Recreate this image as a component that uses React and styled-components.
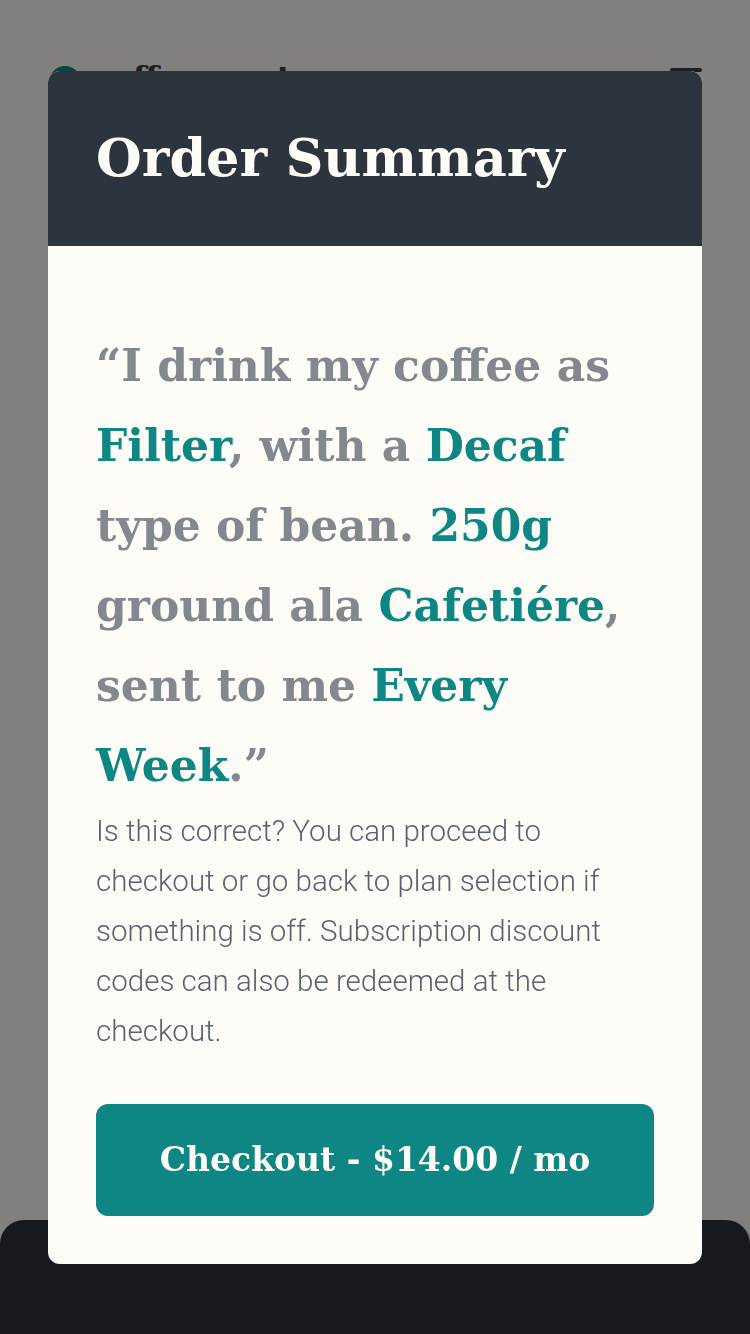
import styled, { createGlobalStyle } from "styled-components";

const Global = createGlobalStyle`
  html, body {
    margin: 0;
    padding: 0;
    background: #fefcf7;
  }
  * { box-sizing: border-box; }
`;

const serif = `"DejaVu Serif", "Liberation Serif", serif`;
const sans = `Roboto, "Liberation Sans", sans-serif`;

const App = () => {
  return (
    <Page>
      <Global />
      <TopBar>
        <Logo>
          <LogoMark viewBox="0 0 32 32">
            <circle cx="16" cy="16" r="15" fill="#0E8784" />
          </LogoMark>
          <LogoText>coffeeroasters</LogoText>
        </Logo>
        <Burger>
          <span />
          <span />
          <span />
        </Burger>
      </TopBar>
      <Main />
      <Footer />

      <Overlay>
        <Modal>
          <ModalHead>
            <Heading>Order Summary</Heading>
          </ModalHead>
          <ModalBody>
            <Quote>
              “I drink my coffee as <Pick>Filter</Pick>, with a <Pick>Decaf</Pick>{" "}
              type of bean. <Pick>250g</Pick> ground ala <Pick>Cafetiére</Pick>, sent
              to me <Pick>Every Week</Pick>.”
            </Quote>
            <Note>
              Is this correct? You can proceed to checkout or go back to plan
              selection if something is off. Subscription discount codes can also
              be redeemed at the checkout.
            </Note>
            <Checkout>Checkout - $14.00 / mo</Checkout>
          </ModalBody>
        </Modal>
      </Overlay>
    </Page>
  );
};

export default App;

const Page = styled.div`
  min-height: 1334px;
  display: flex;
  flex-direction: column;
  background: #fefcf7;
`;

const TopBar = styled.header`
  display: flex;
  justify-content: space-between;
  align-items: flex-start;
  padding: 62px 48px 0;
`;

const Logo = styled.div`
  display: flex;
  align-items: flex-start;
  gap: 10px;
`;

const LogoMark = styled.svg`
  width: 34px;
  height: 34px;
  margin-top: 3px;
`;

const LogoText = styled.span`
  font-family: ${serif};
  font-weight: 700;
  font-size: 32px;
  line-height: 1;
  color: #333d4b;
`;

const Burger = styled.div`
  display: flex;
  flex-direction: column;
  gap: 8px;
  margin-top: 6px;
  span {
    display: block;
    width: 32px;
    height: 4px;
    border-radius: 2px;
    background: #333d4b;
  }
`;

const Main = styled.main`
  flex: 1;
`;

const Footer = styled.footer`
  height: 114px;
  background: #2c343e;
  border-radius: 24px 24px 0 0;
`;

const Overlay = styled.div`
  position: fixed;
  inset: 0;
  background: rgba(0, 0, 0, 0.49);
  display: flex;
  align-items: center;
  justify-content: center;
`;

const Modal = styled.section`
  width: 654px;
  background: #fefcf7;
  border-radius: 12px;
  overflow: hidden;
`;

const ModalHead = styled.div`
  height: 175px;
  background: #2c343e;
  display: flex;
  align-items: center;
  padding: 0 48px;
`;

const Heading = styled.h2`
  margin: 0;
  font-family: ${serif};
  font-weight: 700;
  font-size: 52.5px;
  line-height: 1;
  color: #fefcf7;
`;

const ModalBody = styled.div`
  padding: 80px 48px 48px;
`;

const Quote = styled.p`
  margin: 0;
  font-family: ${serif};
  font-weight: 700;
  font-size: 44px;
  line-height: 80px;
  color: #83888f;
`;

const Pick = styled.span`
  color: #0e8784;
`;

const Note = styled.p`
  margin: 0;
  font-family: ${sans};
  font-weight: 300;
  font-size: 29.5px;
  line-height: 50px;
  color: #5b616d;
`;

const Checkout = styled.button`
  display: block;
  width: 100%;
  height: 112px;
  margin-top: 48px;
  border: none;
  border-radius: 12px;
  background: #0e8784;
  color: #fefcf7;
  font-family: ${serif};
  font-weight: 700;
  font-size: 33px;
  cursor: pointer;
`;
